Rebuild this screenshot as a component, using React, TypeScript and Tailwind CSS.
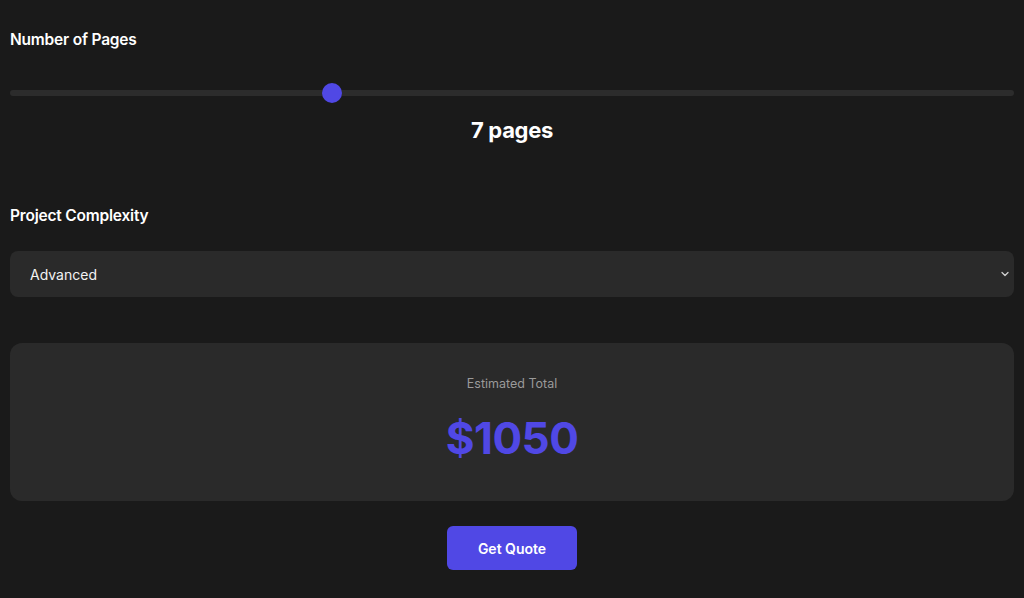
import React, { useState } from 'react';

const MIN = 1;
const MAX = 20;

export default function App() {
  const [pages] = useState(7);
  const [complexity] = useState('Advanced');
  const pct = (pages - MIN) / (MAX - MIN);

  return (
    <div className="min-h-screen bg-[#1a1a1a] px-[10px] pt-[28px] text-white" style={{ fontFamily: 'Inter, "Noto Sans", sans-serif' }}>
      <h3 className="text-[15.5px] font-semibold leading-6 tracking-[-0.2px]">Number of Pages</h3>

      {/* Slider */}
      <div className="relative mt-[31px] h-5 w-full">
        <div className="absolute left-0 right-0 top-[7px] h-[6px] rounded-full bg-[#2c2c2c]" />
        <div
          className="absolute top-0 h-5 w-5 rounded-full bg-[#5048e5]"
          style={{ left: `calc(${pct} * (100% - 20px) + 1px)` }}
        />
      </div>
      <p className="mt-[12px] text-center text-[22px] font-bold leading-[30px] tracking-[-0.3px]">{pages} pages</p>

      <h3 className="mt-[59px] text-[15.5px] font-semibold leading-6 tracking-[-0.2px]">Project Complexity</h3>

      {/* Select */}
      <div className="mt-[23px] flex h-[46px] items-center justify-between rounded-lg bg-[#2a2a2a] pl-[20px] pr-[5px]">
        <span className="text-[14px] font-normal text-[#f2f2f2]">{complexity}</span>
        <svg width="8" height="6" viewBox="0 0 8 6" fill="none" className="text-[#cfcfcf]">
          <path d="M1 1.5 L4 4.5 L7 1.5" stroke="currentColor" strokeWidth="1.3" strokeLinecap="round" strokeLinejoin="round" />
        </svg>
      </div>

      {/* Total */}
      <div className="mt-[46px] flex h-[158px] flex-col items-center rounded-xl bg-[#2a2a2a] pt-[31px]">
        <p className="text-[12.5px] leading-5 text-[#9a9a9a]">Estimated Total</p>
        <p className="mt-[16px] text-[44px] font-bold leading-[56px] tracking-[-0.5px] text-[#5048e5]">$1050</p>
      </div>

      <div className="mt-[25px] flex justify-center">
        <button className="h-[44px] w-[130px] rounded-md bg-[#5048e5] text-[14px] font-semibold text-white">
          Get Quote
        </button>
      </div>
    </div>
  );
}
